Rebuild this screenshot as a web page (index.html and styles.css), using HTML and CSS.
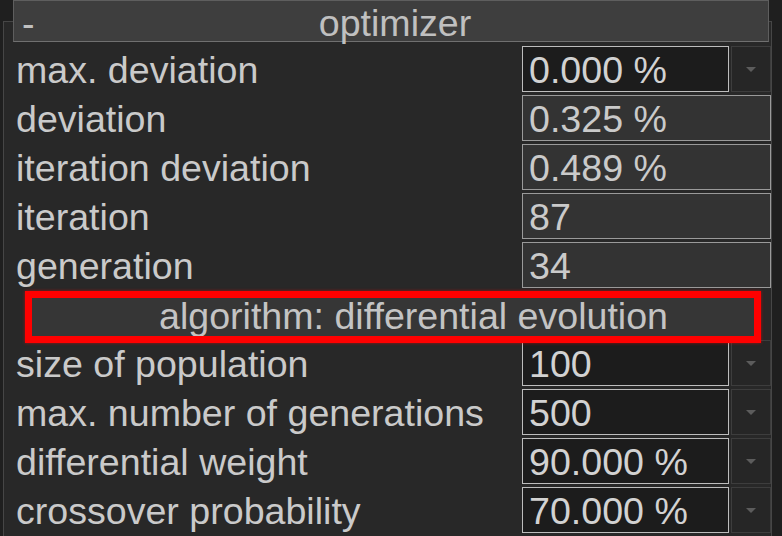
FILE: index.html
```html
<!DOCTYPE html>
<html lang="en">
<head>
<meta charset="UTF-8">
<title>optimizer</title>
<link rel="stylesheet" href="styles.css">
</head>
<body>
  <div class="panel">
    <div class="panel-head">
      <span class="collapse">-</span>
      <span class="title">optimizer</span>
    </div>
    <div class="rows">
      <div class="row">
        <div class="label">max. deviation</div>
        <div class="field edit">0.000 %</div>
        <div class="drop"></div>
      </div>
      <div class="row">
        <div class="label">deviation</div>
        <div class="field readonly">0.325 %</div>
      </div>
      <div class="row">
        <div class="label">iteration deviation</div>
        <div class="field readonly">0.489 %</div>
      </div>
      <div class="row">
        <div class="label">iteration</div>
        <div class="field readonly">87</div>
      </div>
      <div class="row">
        <div class="label">generation</div>
        <div class="field readonly">34</div>
      </div>
      <div class="section">
        algorithm: differential evolution
        <div class="highlight"></div>
      </div>
      <div class="row">
        <div class="label">size of population</div>
        <div class="field edit">100</div>
        <div class="drop"></div>
      </div>
      <div class="row">
        <div class="label">max. number of generations</div>
        <div class="field edit">500</div>
        <div class="drop"></div>
      </div>
      <div class="row">
        <div class="label">differential weight</div>
        <div class="field edit">90.000 %</div>
        <div class="drop"></div>
      </div>
      <div class="row">
        <div class="label">crossover probability</div>
        <div class="field edit">70.000 %</div>
        <div class="drop"></div>
      </div>
    </div>
  </div>
</body>
</html>
```

FILE: styles.css
```css
* {
  box-sizing: border-box;
}

body {
  margin: 0;
  height: 536px;
  overflow: hidden;
  background: #1f1f1f;
  color: #cacaca;
  font-family: "Liberation Sans", Arial, sans-serif;
  font-size: 37.6px;
}

.panel {
  margin: 21px 0 0 3px;
  width: 769px;
  height: 515px;
  background: #282828;
  border: 1px solid #464646;
  border-bottom: none;
}

.panel-head {
  display: flex;
  margin: -22px 2px 0 9px;
  height: 42px;
  padding-top: 2px;
  line-height: 40px;
  background: #3e3e3e;
  border: 1px solid #5e5e5e;
  border-bottom-color: #707070;
  color: #c0c0c0;
}

.collapse {
  width: 0;
  padding-left: 8px;
}

.title {
  flex: 1;
  text-align: center;
}

.rows {
  display: flex;
  flex-direction: column;
  gap: 3px;
  padding-top: 4px;
}

.row {
  display: grid;
  grid-template-columns: 516px 207px 40px;
  column-gap: 2px;
  height: 46px;
}

.label {
  padding: 2px 0 0 12px;
  line-height: 44px;
  white-space: nowrap;
}

.field {
  padding: 2px 0 0 6px;
  line-height: 42px;
  border: 1px solid #bdbdbd;
  white-space: nowrap;
}

.field.edit {
  background: #1c1c1c;
  color: #d2d2d2;
}

.field.readonly {
  grid-column: 2 / 4;
  background: #333333;
  border-color: #9a9a9a;
}

.drop {
  display: flex;
  justify-content: center;
  align-items: center;
  background: #262626;
  border: 1px solid #3d3d3d;
}

.drop::after {
  content: "";
  border-left: 5px solid transparent;
  border-right: 5px solid transparent;
  border-top: 5px solid #5c5c5c;
}

.section {
  position: relative;
  z-index: 1;
  margin: 0 16px 0 26px;
  height: 46px;
  padding: 4px 0 0 42px;
  line-height: 40px;
  text-align: center;
  background: #363636;
  border: 1px solid #555555;
  color: #c4c4c4;
  white-space: nowrap;
}

/* red annotation frame */
.highlight {
  position: absolute;
  top: -1px;
  left: -6px;
  right: -7px;
  height: 52px;
  border: 7px solid #ff0000;
  box-shadow: 0 0 3px rgba(255, 0, 0, 0.6);
  pointer-events: none;
}
```
